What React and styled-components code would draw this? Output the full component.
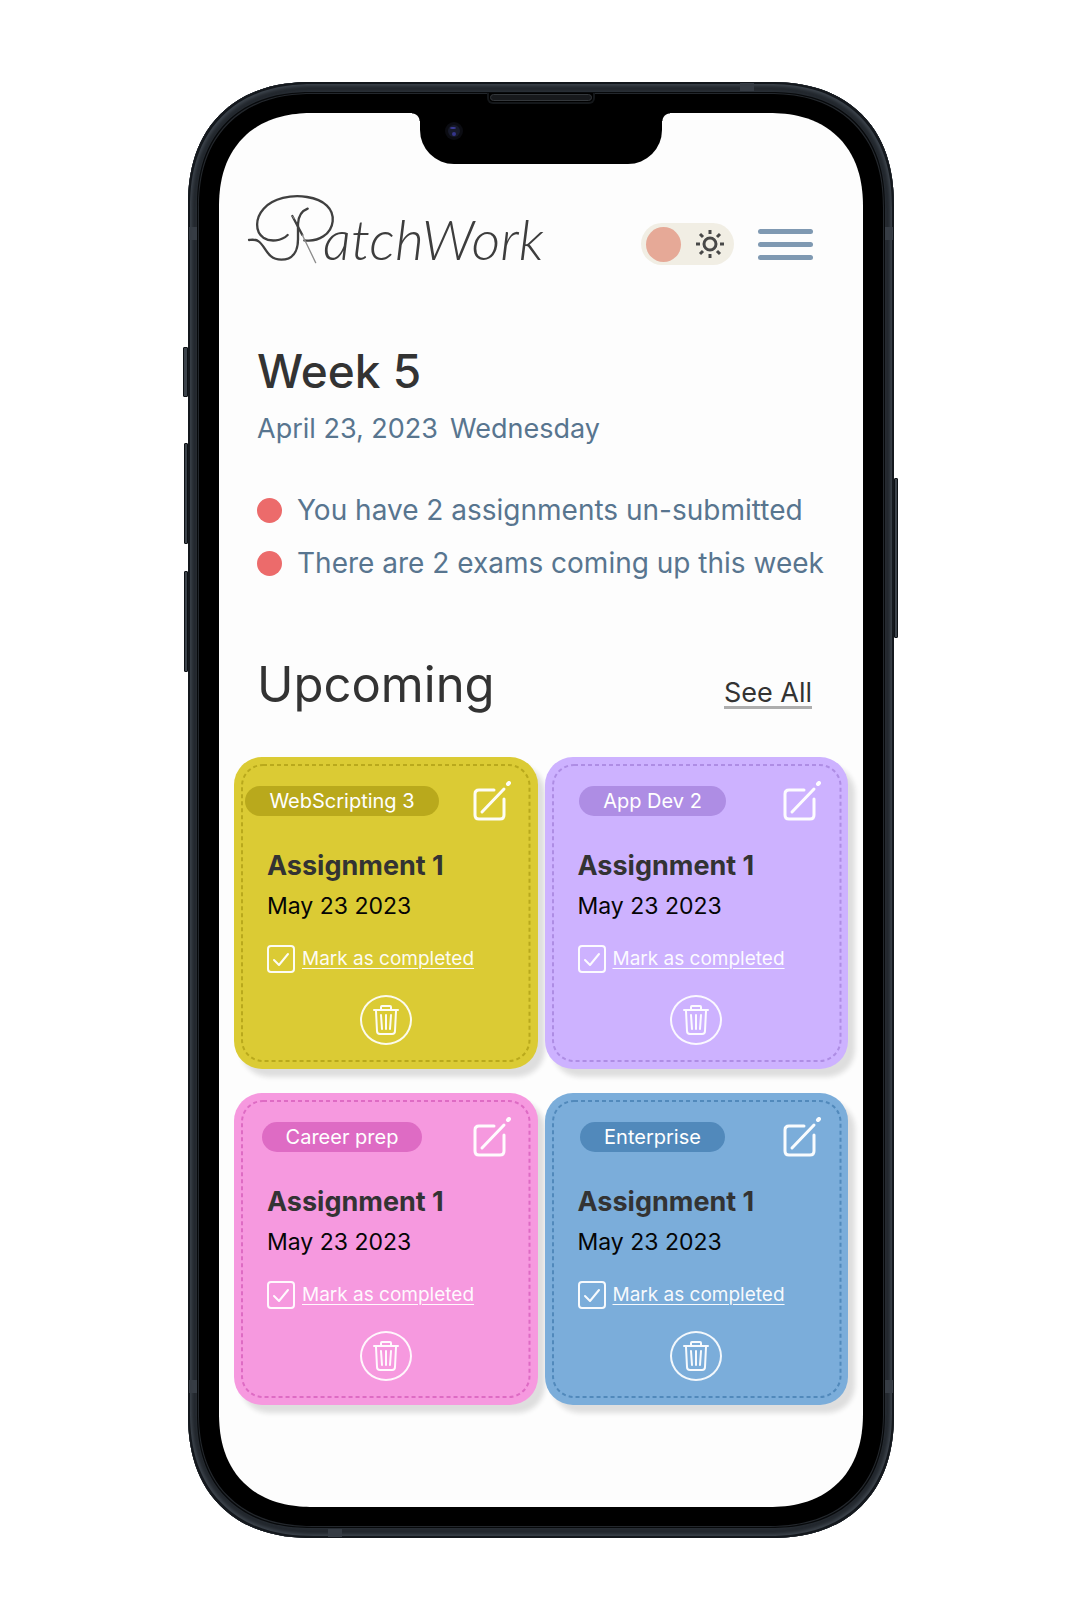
import React, { useState } from "react";
import styled, { createGlobalStyle } from "styled-components";

const GlobalStyle = createGlobalStyle`
  *, *::before, *::after { box-sizing: border-box; }
  body { margin: 0; background: #fff; font-family: Inter, "Open Sans", sans-serif; color: #333; }
  h1, h2, h3, p, ul { margin: 0; padding: 0; font-weight: 400; }
  button { margin: 0; padding: 0; border: 0; background: none; color: inherit; font: inherit; cursor: pointer; }
`;

const Page = styled.main`
  display: flex;
  justify-content: center;
  padding: 82px 14px 82px 16px;
`;

const Phone = styled.div`
  position: relative;
  width: 100%;
  max-width: 706px;
  padding: 11px 10px;
  border-radius: 108px;
  background: #2b3138;
  box-shadow: inset 0 0 0 2px #14181d, inset 0 0 3px 4px #3b424a, inset 0 0 3px 9px #23282e;

  @supports (corner-shape: superellipse(1.2)) {
    border-radius: 124px;
    corner-shape: superellipse(1.2);
  }
`;

const Bezel = styled.div`
  position: relative;
  padding: 20px 21px;
  border-radius: 98px;
  background: #000;
  box-shadow: 0 0 0 1px #07090b, inset 0 0 0 1px #23272c;

  @supports (corner-shape: superellipse(1.2)) {
    border-radius: 114px;
    corner-shape: superellipse(1.2);
  }
`;

const SideKey = styled.span`
  position: absolute;
  ${(p) => p.$side}: -${(p) => p.$depth}px;
  top: ${(p) => p.$top}px;
  width: ${(p) => p.$depth}px;
  height: ${(p) => p.$length}px;
  border: 1px solid #0e1216;
  border-radius: 1px;
  background: #3c434b;
`;

const SideBand = styled.span`
  position: absolute;
  ${(p) => p.$side}: 1px;
  ${(p) => p.$from}: 145px;
  width: 8px;
  height: 13px;
  background: #363c44;
`;

const EdgeBand = styled.span`
  position: absolute;
  ${(p) => p.$edge}: 1px;
  ${(p) => p.$from}: 140px;
  width: 14px;
  height: 8px;
  background: #363c44;
`;

const Speaker = styled.span`
  position: absolute;
  top: 0;
  left: 50%;
  width: 108px;
  height: 11px;
  margin-left: -54px;
  border: 2px solid #14171a;
  border-top: 0;
  border-radius: 0 0 6px 6px;
  background: #000;

  &::after {
    content: "";
    display: block;
    height: 7px;
    margin: 1px;
    border: 1px solid #33373b;
    border-radius: 4px;
    background: #17191c;
  }
`;

const Screen = styled.div`
  overflow: hidden;
  padding-bottom: 102px;
  border-radius: 86px;
  background: #fdfdfd;

  @supports (corner-shape: superellipse(1.2)) {
    border-radius: 94px;
    corner-shape: superellipse(1.2);
  }
`;

const Notch = styled.div`
  position: relative;
  width: 242px;
  height: 51px;
  margin: 0 auto;
  padding: 8px 24px;
  border-radius: 0 0 34px 34px;
  background: #000;

  &::before, &::after {
    content: "";
    position: absolute;
    top: 0;
    width: 8px;
    height: 8px;
  }
  &::before { right: 100%; background: radial-gradient(circle at 0 100%, transparent 7px, #000 8px); }
  &::after { left: 100%; background: radial-gradient(circle at 100% 100%, transparent 7px, #000 8px); }
`;

const Header = styled.header`
  display: flex;
  align-items: flex-end;
  gap: 24px;
  height: 101px;
  padding: 0 50px 0 28px;
`;

const Brand = styled.h1`
  display: flex;
  align-items: flex-end;
  flex: 1;
  height: 72px;

  svg { flex: none; overflow: visible; }
`;

const Wordmark = styled.span`
  margin-left: -12px;
  font: italic 300 56px/52px Lato, sans-serif;
  color: #3d3d3d;
`;

const Switch = styled.label`
  display: flex;
  align-items: center;
  justify-content: space-between;
  flex-direction: ${(p) => (p.$on ? "row-reverse" : "row")};
  width: 93px;
  height: 42px;
  padding: 0 8px 0 5px;
  border-radius: 21px;
  background: #f1eee4;
  cursor: pointer;

  input {
    appearance: none;
    width: 35px;
    height: 35px;
    margin: 0;
    border-radius: 50%;
    background: #e6a997;
  }
`;

const MenuButton = styled.button`
  display: flex;
  flex-direction: column;
  justify-content: center;
  gap: 8px;
  width: 55px;
  height: 42px;

  span { height: 5px; border-radius: 3px; background: #7f99b2; }
`;

const Intro = styled.section`
  padding: 78px 28px 0 38px;
`;

const WeekTitle = styled.h2`
  font-size: 46px;
  line-height: 56px;
  font-weight: 500;
`;

const DateLine = styled.p`
  display: flex;
  gap: 12px;
  margin-top: 12px;
  font-size: 27px;
  line-height: 36px;
  color: #58758f;
`;

const Notices = styled.ul`
  display: grid;
  gap: 17px;
  margin-top: 45px;
  list-style: none;
`;

const Notice = styled.li`
  display: flex;
  align-items: center;
  gap: 15px;
  font-size: 28px;
  line-height: 36px;
  color: #58758f;
  white-space: nowrap;

  &::before {
    content: "";
    flex: none;
    width: 25px;
    height: 25px;
    border-radius: 50%;
    background: #ec6b6b;
  }
`;

const SectionHead = styled.div`
  display: flex;
  align-items: baseline;
  justify-content: space-between;
  margin-top: 76px;
  padding: 0 51px 0 38px;
`;

const SectionTitle = styled.h2`
  font-size: 49px;
  line-height: 56px;
`;

const SeeAll = styled.a`
  border-bottom: 3px solid #adadad;
  font-size: 27px;
  line-height: 26px;
  color: #333;
  text-decoration: none;
`;

const Cards = styled.section`
  display: grid;
  grid-template-columns: 1fr 1fr;
  gap: 24px 7px;
  margin-top: 44px;
  padding: 0 15px;
`;

const Card = styled.article`
  position: relative;
  display: flex;
  flex-direction: column;
  padding: 24px 27px 24px 33px;
  border-radius: 28px;
  background: ${(p) => p.$tone.base};
  box-shadow: 7px 8px 5px #dedede;
`;

const Stitching = styled.svg`
  position: absolute;
  inset: 0;
  width: 100%;
  height: 100%;
  pointer-events: none;

  rect {
    x: 8px;
    y: 8px;
    width: calc(100% - 16px);
    height: calc(100% - 16px);
    rx: 21px;
    fill: none;
    stroke: ${(p) => p.$color};
    stroke-width: 2px;
    stroke-dasharray: 4 3;
  }
`;

const CardTop = styled.div`
  display: flex;
  align-items: center;
  justify-content: space-between;
  height: 40px;
  margin-left: -24px;
`;

const TagSlot = styled.div`
  display: flex;
  justify-content: center;
  width: 198px;
`;

const Tag = styled.span`
  position: relative;
  padding: 0 24px;
  border-radius: 15px;
  background: ${(p) => p.$color};
  font-size: 20px;
  line-height: 30px;
  color: #fff;
  white-space: nowrap;
`;

const IconButton = styled.button`
  display: flex;
`;

const CardTitle = styled.h3`
  margin-top: 29px;
  font-size: 27px;
  line-height: 32px;
  font-weight: 700;
`;

const Due = styled.p`
  margin-top: 10px;
  font-size: 23px;
  line-height: 28px;
  color: #050505;
`;

const Complete = styled.label`
  display: flex;
  align-items: center;
  gap: 7px;
  margin-top: 25px;
  font-size: 19px;
  line-height: 28px;
  color: #fffffff0;
  text-decoration: underline;
  text-decoration-thickness: 1px;
  text-underline-offset: 3px;
  white-space: nowrap;
  cursor: pointer;
`;

const Tick = styled.span`
  display: grid;
  flex: none;
  width: 28px;
  height: 28px;

  input, svg { grid-area: 1 / 1; }
  input {
    appearance: none;
    width: 28px;
    height: 28px;
    margin: 0;
    border: 2px solid #fffffff0;
    border-radius: 4px;
  }
  svg { visibility: hidden; pointer-events: none; }
  input:checked + svg { visibility: visible; }
`;

const DeleteButton = styled.button`
  align-self: center;
  display: flex;
  align-items: center;
  justify-content: center;
  width: 52px;
  height: 50px;
  margin: 22px 0 0 -6px;
  border: 2px solid #ffffffe8;
  border-radius: 50%;
`;

const ThreadMark = () => (
  <svg width="88" height="72" viewBox="48 42 264 216" fill="none" stroke="#404040" strokeWidth="7" strokeLinecap="round" aria-hidden="true">
    <path d="M170 168C152 186 118 190 97 176C72 158 72 118 98 89C126 58 181 46 228 54C280 62 309 90 305 127C301 165 263 190 220 184" />
    <path d="M230 89C211 96 202 113 201 135L201 181C201 219 184 242 151 242C108 242 105 203 83 187C74 180 64 182 54 183" />
    <path d="M184 111L214 168" />
    <path d="M185 112L189 119" stroke="#aaa" strokeWidth="2" />
    <path d="M214 168L254 251" stroke="#8c8c8c" strokeWidth="4" />
  </svg>
);

const SunIcon = () => (
  <svg width="32" height="32" viewBox="0 0 32 32" fill="none" stroke="#484848" strokeWidth="3" aria-hidden="true">
    <circle cx="16" cy="16" r="6" />
    <path d="M16 2V6M16 26V30M2 16H6M26 16H30M6 6L9 9M23 23L26 26M6 26L9 23M23 9L26 6" />
  </svg>
);

const EditIcon = () => (
  <svg width="38" height="40" viewBox="0 0 38 40" fill="none" stroke="#fffffff4" strokeWidth="3" strokeLinecap="round" aria-hidden="true">
    <path d="M21 9H6Q2 9 2 13V34Q2 38 6 38H27Q31 38 31 34V18" />
    <path d="M9 31L31 8" />
    <path d="M35 3L36 2" strokeWidth="4" />
  </svg>
);

const CheckIcon = () => (
  <svg width="28" height="28" viewBox="0 0 28 28" fill="none" stroke="#fffffff0" strokeWidth="2" strokeLinecap="round" strokeLinejoin="round" aria-hidden="true">
    <path d="M7 15L12 20L21 9" />
  </svg>
);

const TrashIcon = () => (
  <svg width="26" height="32" viewBox="0 0 26 32" fill="none" stroke="#fffffff0" strokeWidth="2" strokeLinecap="round" strokeLinejoin="round" aria-hidden="true">
    <path d="M1 6H25M8 6V3Q8 2 9 2H17Q18 2 18 3V6M3 7L4 27Q4 30 7 30H19Q22 30 22 27L23 7" />
    <path d="M8 11L9 25M13 11V25M18 11L17 25" />
  </svg>
);

const assignments = [
  { course: "WebScripting 3", tone: { base: "#dbcb34", stitch: "#b9a91c", tag: "#b9a91c" } },
  { course: "App Dev 2", tone: { base: "#cdb2ff", stitch: "#ae8de4", tag: "#ae8de4" } },
  { course: "Career prep", tone: { base: "#f699df", stitch: "#de6bc4", tag: "#de6bc4" } },
  { course: "Enterprise", tone: { base: "#7badda", stitch: "#5189bb", tag: "#5189bb" } },
];

function AssignmentCard({ course, tone }) {
  return (
    <Card $tone={tone}>
      <Stitching $color={tone.stitch} aria-hidden="true"><rect /></Stitching>
      <CardTop>
        <TagSlot><Tag $color={tone.tag}>{course}</Tag></TagSlot>
        <IconButton type="button" aria-label="Edit"><EditIcon /></IconButton>
      </CardTop>
      <CardTitle>Assignment 1</CardTitle>
      <Due>May 23 2023</Due>
      <Complete>
        <Tick><input type="checkbox" defaultChecked /><CheckIcon /></Tick>
        Mark as completed
      </Complete>
      <DeleteButton type="button" aria-label="Delete"><TrashIcon /></DeleteButton>
    </Card>
  );
}

export default function App() {
  const [dark, setDark] = useState(false);
  return (
    <>
      <GlobalStyle />
      <Page>
        <Phone>
          <SideKey $side="left" $depth={5} $top={265} $length={50} />
          <SideKey $side="left" $depth={4} $top={361} $length={101} />
          <SideKey $side="left" $depth={4} $top={489} $length={101} />
          <SideKey $side="right" $depth={4} $top={396} $length={160} />
          <SideBand $side="left" $from="top" />
          <SideBand $side="right" $from="top" />
          <SideBand $side="left" $from="bottom" />
          <SideBand $side="right" $from="bottom" />
          <EdgeBand $edge="top" $from="right" />
          <EdgeBand $edge="bottom" $from="left" />
          <Bezel>
            <Speaker />
            <Screen>
              <Notch>
                <svg width="20" height="20" viewBox="0 0 20 20" aria-hidden="true">
                  <circle cx="10" cy="10" r="9" fill="#0b0c12" />
                  <circle cx="10" cy="10" r="6" fill="#171a2b" />
                  <ellipse cx="9" cy="7" rx="3" ry="1" fill="#3d3d9c" />
                  <ellipse cx="10" cy="13" rx="2" ry="2" fill="#35358c" />
                </svg>
              </Notch>
              <Header>
                <Brand aria-label="PatchWork">
                  <ThreadMark />
                  <Wordmark>atchWork</Wordmark>
                </Brand>
                <Switch $on={dark}>
                  <input type="checkbox" role="switch" aria-label="Dark mode" checked={dark} onChange={() => setDark(!dark)} />
                  <SunIcon />
                </Switch>
                <MenuButton type="button" aria-label="Menu"><span /><span /><span /></MenuButton>
              </Header>
              <Intro>
                <WeekTitle>Week 5</WeekTitle>
                <DateLine><span>April 23, 2023</span><span>Wednesday</span></DateLine>
                <Notices>
                  <Notice>You have 2 assignments un-submitted</Notice>
                  <Notice>There are 2 exams coming up this week</Notice>
                </Notices>
              </Intro>
              <SectionHead>
                <SectionTitle>Upcoming</SectionTitle>
                <SeeAll href="#all">See All</SeeAll>
              </SectionHead>
              <Cards>
                {assignments.map((a) => <AssignmentCard key={a.course} {...a} />)}
              </Cards>
            </Screen>
          </Bezel>
        </Phone>
      </Page>
    </>
  );
}
